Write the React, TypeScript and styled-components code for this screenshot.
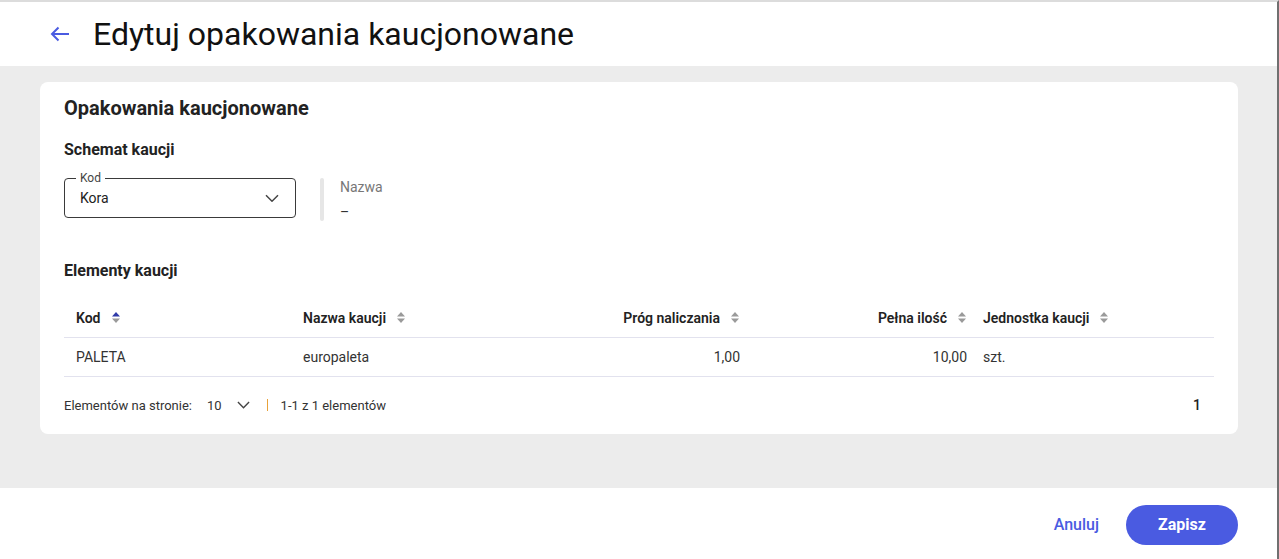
import React from "react";
import styled, { createGlobalStyle } from "styled-components";

const Global = createGlobalStyle`
  html, body { margin: 0; padding: 0; background: #ffffff; }
  body { font-family: Roboto, "Liberation Sans", sans-serif; color: #222; }
  * { box-sizing: border-box; }
`;

const Frame = styled.div`
  width: 1279px;
  height: 559px;
  display: flex;
  flex-direction: column;
  border-top: 2px solid #dcdcdc;
  border-right: 2px solid #707070;
  overflow: hidden;
`;

const Header = styled.header`
  height: 64px;
  background: #fff;
  display: flex;
  align-items: center;
  padding-left: 48px;
  gap: 21px;
  flex-shrink: 0;
`;

const BackButton = styled.button`
  border: 0;
  background: none;
  padding: 0;
  width: 24px;
  height: 24px;
  display: flex;
  align-items: center;
  justify-content: center;
  color: #4a5be1;
  cursor: pointer;
`;

const Title = styled.h1`
  margin: 0;
  font-size: 32px;
  font-weight: 400;
  color: #111;
  letter-spacing: 0;
`;

const Body = styled.main`
  flex: 1;
  background: #ececec;
  padding: 16px 39px 0 40px;
`;

const Card = styled.section`
  background: #fff;
  border-radius: 8px;
  padding: 14px 24px 0 24px;
  display: flex;
  flex-direction: column;
`;

const CardTitle = styled.h2`
  margin: 0;
  font-size: 20px;
  font-weight: 700;
  color: #222;
  line-height: 24px;
`;

const SectionTitle = styled.h3<{ $mt: number }>`
  margin: ${(p) => p.$mt}px 0 0 0;
  font-size: 16px;
  font-weight: 700;
  color: #222;
  line-height: 20px;
`;

const FieldRow = styled.div`
  display: flex;
  align-items: stretch;
  margin-top: 18px;
  gap: 24px;
`;

const SelectBox = styled.div`
  position: relative;
  width: 232px;
  height: 40px;
  border: 1px solid #3a3a3a;
  border-radius: 4px;
  display: flex;
  align-items: center;
  justify-content: space-between;
  padding: 0 16px 0 15px;
  font-size: 14px;
  color: #222;
`;

const Legend = styled.span`
  position: absolute;
  top: -8px;
  left: 11px;
  padding: 0 4px;
  background: #fff;
  font-size: 12px;
  line-height: 14px;
  color: #444;
`;

const ReadField = styled.div`
  display: flex;
  gap: 16px;
`;

const Bar = styled.div`
  width: 4px;
  background: #e6e6e6;
  border-radius: 2px;
`;

const ReadInner = styled.div`
  display: flex;
  flex-direction: column;
  padding-top: 1px;
`;

const ReadLabel = styled.span`
  font-size: 14px;
  color: #777;
  line-height: 16px;
`;

const ReadValue = styled.span`
  font-size: 14px;
  color: #333;
  line-height: 18px;
  margin-top: 8px;
`;

const Table = styled.div`
  margin-top: 17px;
  display: flex;
  flex-direction: column;
`;

const Grid = styled.div<{ $head?: boolean }>`
  display: grid;
  grid-template-columns: 227px 227px 226px 227px 1fr;
  height: ${(p) => (p.$head ? 40 : 39)}px;
  align-items: center;
  border-bottom: 1px solid #e2e2ee;
  padding-left: 12px;
  font-size: 14px;
  font-weight: ${(p) => (p.$head ? 600 : 400)};
  color: ${(p) => (p.$head ? "#222" : "#333")};
`;

const Cell = styled.div<{ $right?: boolean }>`
  display: flex;
  align-items: center;
  justify-content: ${(p) => (p.$right ? "flex-end" : "flex-start")};
  gap: 10px;
  padding-right: ${(p) => (p.$right ? 16 : 0)}px;
  white-space: nowrap;
`;

const Pager = styled.div`
  display: flex;
  align-items: center;
  height: 57px;
  padding-bottom: 1px;
  font-size: 13px;
  color: #333;
`;

const PagerLabel = styled.span`
  margin-right: 15px;
`;

const PageSize = styled.span`
  display: flex;
  align-items: center;
  gap: 15px;
  font-size: 13px;
`;

const Sep = styled.span`
  width: 1px;
  height: 12px;
  background: #e8a23a;
  margin: 0 13px 0 17px;
`;

const PageNum = styled.span`
  margin-left: auto;
  margin-right: 13px;
  font-size: 14px;
  font-weight: 500;
  color: #222;
`;

const Footer = styled.footer`
  height: 71px;
  flex-shrink: 0;
  background: #fff;
  display: flex;
  align-items: center;
  justify-content: flex-end;
  padding-right: 39px;
  padding-top: 2px;
  gap: 27px;
`;

const TextButton = styled.button`
  border: 0;
  background: none;
  font-family: inherit;
  font-size: 16px;
  font-weight: 500;
  color: #4a5be1;
  padding: 0;
  cursor: pointer;
`;

const PrimaryButton = styled.button`
  border: 0;
  background: #4a5be1;
  color: #fff;
  font-family: inherit;
  font-size: 16px;
  font-weight: 700;
  width: 112px;
  height: 40px;
  border-radius: 20px;
  cursor: pointer;
`;

const SortIcon = ({ active }: { active?: boolean }) => (
  <svg width="10" height="13" viewBox="0 0 10 13">
    <path d="M1 5.5 L5 1 L9 5.5 Z" fill={active ? "#2f3aa8" : "#9a9a9a"} />
    <path d="M1 7.5 L5 12 L9 7.5 Z" fill="#9a9a9a" />
  </svg>
);

const Chevron = ({ size = 14 }: { size?: number }) => (
  <svg width={size} height={size * 0.6} viewBox="0 0 14 8" fill="none">
    <path d="M1 1 L7 7 L13 1" stroke="#444" strokeWidth="1.5" />
  </svg>
);

export default function App() {
  return (
    <>
      <Global />
      <Frame>
        <Header>
          <BackButton aria-label="Wstecz">
            <svg width="20" height="16" viewBox="0 0 20 16" fill="none">
              <path d="M19 8 H2 M8.5 1.5 L2 8 L8.5 14.5" stroke="#4a5be1" strokeWidth="2" />
            </svg>
          </BackButton>
          <Title>Edytuj opakowania kaucjonowane</Title>
        </Header>
        <Body>
          <Card>
            <CardTitle>Opakowania kaucjonowane</CardTitle>
            <SectionTitle $mt={20}>Schemat kaucji</SectionTitle>
            <FieldRow>
              <SelectBox>
                <Legend>Kod</Legend>
                <span>Kora</span>
                <Chevron />
              </SelectBox>
              <ReadField>
                <Bar />
                <ReadInner>
                  <ReadLabel>Nazwa</ReadLabel>
                  <ReadValue>–</ReadValue>
                </ReadInner>
              </ReadField>
            </FieldRow>
            <SectionTitle $mt={40}>Elementy kaucji</SectionTitle>
            <Table>
              <Grid $head>
                <Cell>Kod <SortIcon active /></Cell>
                <Cell>Nazwa kaucji <SortIcon /></Cell>
                <Cell $right>Próg naliczania <SortIcon /></Cell>
                <Cell $right>Pełna ilość <SortIcon /></Cell>
                <Cell>Jednostka kaucji <SortIcon /></Cell>
              </Grid>
              <Grid>
                <Cell>PALETA</Cell>
                <Cell>europaleta</Cell>
                <Cell $right>1,00</Cell>
                <Cell $right>10,00</Cell>
                <Cell>szt.</Cell>
              </Grid>
              <Pager>
                <PagerLabel>Elementów na stronie:</PagerLabel>
                <PageSize>
                  10
                  <Chevron size={13} />
                </PageSize>
                <Sep />
                <span>1-1 z 1 elementów</span>
                <PageNum>1</PageNum>
              </Pager>
            </Table>
          </Card>
        </Body>
        <Footer>
          <TextButton>Anuluj</TextButton>
          <PrimaryButton>Zapisz</PrimaryButton>
        </Footer>
      </Frame>
    </>
  );
}
